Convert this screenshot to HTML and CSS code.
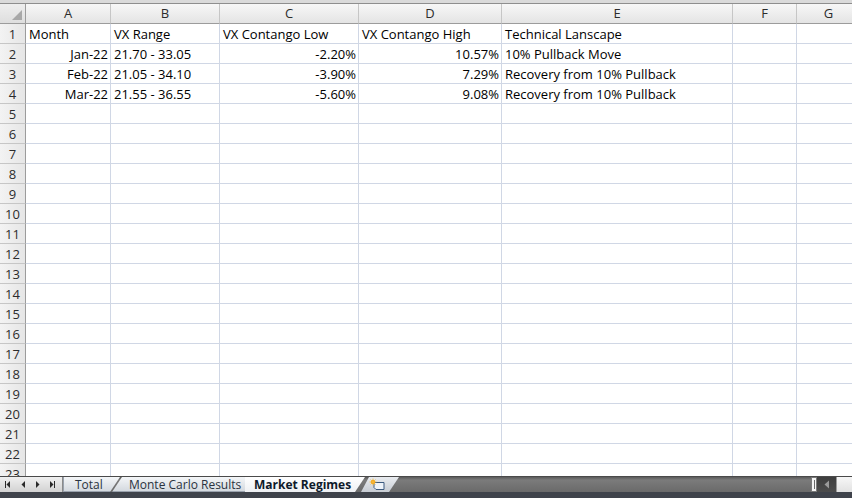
FILE: index.html
```html
<!DOCTYPE html>
<html>
<head>
<meta charset="utf-8">
<link rel="stylesheet" href="styles.css">
</head>
<body>
<div class="app">
  <div class="ribbon-edge"></div>
  <div class="sheet">
    <div class="grid">
      <div class="corner"><svg width="12" height="12" viewBox="0 0 12 12"><polygon points="11,1 11,11 1,11" fill="#a8a8a8"/></svg></div>
      <div class="colhead">A</div><div class="colhead">B</div><div class="colhead">C</div><div class="colhead">D</div><div class="colhead">E</div><div class="colhead">F</div><div class="colhead">G</div>

      <div class="rowhead">1</div><div class="cell">Month</div><div class="cell">VX Range</div><div class="cell">VX Contango Low</div><div class="cell">VX Contango High</div><div class="cell">Technical Lanscape</div><div class="cell"></div><div class="cell"></div>
      <div class="rowhead">2</div><div class="cell num">Jan-22</div><div class="cell">21.70 - 33.05</div><div class="cell num">-2.20%</div><div class="cell num">10.57%</div><div class="cell">10% Pullback Move</div><div class="cell"></div><div class="cell"></div>
      <div class="rowhead">3</div><div class="cell num">Feb-22</div><div class="cell">21.05 - 34.10</div><div class="cell num">-3.90%</div><div class="cell num">7.29%</div><div class="cell">Recovery from 10% Pullback</div><div class="cell"></div><div class="cell"></div>
      <div class="rowhead">4</div><div class="cell num">Mar-22</div><div class="cell">21.55 - 36.55</div><div class="cell num">-5.60%</div><div class="cell num">9.08%</div><div class="cell">Recovery from 10% Pullback</div><div class="cell"></div><div class="cell"></div>
      <div class="rowhead">5</div><div class="cell"></div><div class="cell"></div><div class="cell"></div><div class="cell"></div><div class="cell"></div><div class="cell"></div><div class="cell"></div>
      <div class="rowhead">6</div><div class="cell"></div><div class="cell"></div><div class="cell"></div><div class="cell"></div><div class="cell"></div><div class="cell"></div><div class="cell"></div>
      <div class="rowhead">7</div><div class="cell"></div><div class="cell"></div><div class="cell"></div><div class="cell"></div><div class="cell"></div><div class="cell"></div><div class="cell"></div>
      <div class="rowhead">8</div><div class="cell"></div><div class="cell"></div><div class="cell"></div><div class="cell"></div><div class="cell"></div><div class="cell"></div><div class="cell"></div>
      <div class="rowhead">9</div><div class="cell"></div><div class="cell"></div><div class="cell"></div><div class="cell"></div><div class="cell"></div><div class="cell"></div><div class="cell"></div>
      <div class="rowhead">10</div><div class="cell"></div><div class="cell"></div><div class="cell"></div><div class="cell"></div><div class="cell"></div><div class="cell"></div><div class="cell"></div>
      <div class="rowhead">11</div><div class="cell"></div><div class="cell"></div><div class="cell"></div><div class="cell"></div><div class="cell"></div><div class="cell"></div><div class="cell"></div>
      <div class="rowhead">12</div><div class="cell"></div><div class="cell"></div><div class="cell"></div><div class="cell"></div><div class="cell"></div><div class="cell"></div><div class="cell"></div>
      <div class="rowhead">13</div><div class="cell"></div><div class="cell"></div><div class="cell"></div><div class="cell"></div><div class="cell"></div><div class="cell"></div><div class="cell"></div>
      <div class="rowhead">14</div><div class="cell"></div><div class="cell"></div><div class="cell"></div><div class="cell"></div><div class="cell"></div><div class="cell"></div><div class="cell"></div>
      <div class="rowhead">15</div><div class="cell"></div><div class="cell"></div><div class="cell"></div><div class="cell"></div><div class="cell"></div><div class="cell"></div><div class="cell"></div>
      <div class="rowhead">16</div><div class="cell"></div><div class="cell"></div><div class="cell"></div><div class="cell"></div><div class="cell"></div><div class="cell"></div><div class="cell"></div>
      <div class="rowhead">17</div><div class="cell"></div><div class="cell"></div><div class="cell"></div><div class="cell"></div><div class="cell"></div><div class="cell"></div><div class="cell"></div>
      <div class="rowhead">18</div><div class="cell"></div><div class="cell"></div><div class="cell"></div><div class="cell"></div><div class="cell"></div><div class="cell"></div><div class="cell"></div>
      <div class="rowhead">19</div><div class="cell"></div><div class="cell"></div><div class="cell"></div><div class="cell"></div><div class="cell"></div><div class="cell"></div><div class="cell"></div>
      <div class="rowhead">20</div><div class="cell"></div><div class="cell"></div><div class="cell"></div><div class="cell"></div><div class="cell"></div><div class="cell"></div><div class="cell"></div>
      <div class="rowhead">21</div><div class="cell"></div><div class="cell"></div><div class="cell"></div><div class="cell"></div><div class="cell"></div><div class="cell"></div><div class="cell"></div>
      <div class="rowhead">22</div><div class="cell"></div><div class="cell"></div><div class="cell"></div><div class="cell"></div><div class="cell"></div><div class="cell"></div><div class="cell"></div>
      <div class="rowhead">23</div><div class="cell"></div><div class="cell"></div><div class="cell"></div><div class="cell"></div><div class="cell"></div><div class="cell"></div><div class="cell"></div>
    </div>
  </div>
  <div class="tabbar">
    <div class="nav">
      <svg width="62" height="15" viewBox="0 0 62 15">
        <rect x="5" y="4" width="1" height="7" fill="#2a2a2a"/>
        <polygon points="10,4 10,11 6.5,7.5" fill="#2a2a2a"/>
        <polygon points="25,4 25,11 21.5,7.5" fill="#2a2a2a"/>
        <polygon points="36,4 36,11 39.5,7.5" fill="#2a2a2a"/>
        <polygon points="50,4 50,11 53.5,7.5" fill="#2a2a2a"/>
        <rect x="54" y="4" width="1" height="7" fill="#2a2a2a"/>
      </svg>
    </div>
    <div class="tab tab-first">Total</div>
    <div class="tab tab-mid">Monte Carlo Results</div>
    <div class="tab tab-active">Market Regimes</div>
    <div class="tab-new">
      <svg width="22" height="14" viewBox="0 0 22 14">
        <path d="M7 4.5 H17 V11.5 H9 L7 9.5 Z" fill="#eef3f9" stroke="#3d5b80" stroke-width="1"/>
        <circle cx="6" cy="4" r="2.2" fill="#f2a21c"/>
        <path d="M6 0.5 V7.5 M2.5 4 H9.5 M3.5 1.5 L8.5 6.5 M8.5 1.5 L3.5 6.5" stroke="#f6b93a" stroke-width="0.8"/>
      </svg>
    </div>
    <div class="strip"></div>
    <div class="hscroll">
      <div class="splitter"><span></span></div>
      <div class="arrow"><svg width="8" height="9" viewBox="0 0 8 9"><polygon points="6,0.5 6,8.5 1.5,4.5" fill="#9a9a9a"/></svg></div>
      <div class="thumb"></div>
    </div>
  </div>
  <div class="statusedge"></div>
</div>
</body>
</html>
```

FILE: styles.css
```css
html, body {
  margin: 0;
  padding: 0;
  width: 852px;
  height: 498px;
  overflow: hidden;
  background: #ffffff;
}

.app {
  display: flex;
  flex-direction: column;
  height: 498px;
  font-family: "Open Sans", "Liberation Sans", sans-serif;
}

.ribbon-edge {
  height: 3px;
  background: #dadada;
  border-bottom: 1px solid #8e8e8e;
  flex: none;
}

.sheet {
  flex: 1;
  overflow: hidden;
  background: #ffffff;
}

.grid {
  display: grid;
  grid-template-columns: 26px 85px 109px 139px 143px 231px 64px 64px;
  grid-auto-rows: 20px;
  width: 861px;
}

.grid > div {
  box-sizing: border-box;
  height: 20px;
  overflow: hidden;
  white-space: nowrap;
}

.corner {
  background: linear-gradient(#eeeeee, #dedede);
  border-right: 1px solid #9c9c9c;
  border-bottom: 1px solid #9c9c9c;
  display: flex;
  align-items: flex-end;
  justify-content: flex-end;
  padding: 0 2px 2px 0;
}

.corner svg { display: block; }

.colhead {
  background: linear-gradient(#f7f7f7, #e4e4e4);
  border-right: 1px solid #c6c6c6;
  border-bottom: 1px solid #9c9c9c;
  color: #2c2c2c;
  font-size: 13px;
  line-height: 19px;
  text-align: center;
}

.rowhead {
  background: linear-gradient(90deg, #f3f3f3, #e6e6e6);
  border-right: 1px solid #9c9c9c;
  border-bottom: 1px solid #c6c6c6;
  color: #2c2c2c;
  font-size: 13px;
  line-height: 20px;
  text-align: center;
}

.cell {
  border-right: 1px solid #d0d7e5;
  border-bottom: 1px solid #d0d7e5;
  color: #000000;
  font-size: 13px;
  line-height: 20px;
  padding: 0 2px 0 3px;
}

.cell.num { text-align: right; }

/* sheet tabs */
.tabbar {
  height: 15px;
  flex: none;
  display: flex;
  align-items: stretch;
  background: linear-gradient(#5a5a5a, #7b7b7b 20%, #6a6a6a);
  border-top: 1px solid #4a4a4a;
  font-size: 12px;
  line-height: 15px;
  position: relative;
}

.nav {
  width: 62px;
  flex: none;
  background: linear-gradient(#f0f0f0, #d2d2d2);
  border-right: 1px solid #8a8a8a;
}

.nav svg { display: block; }

.tab {
  flex: none;
  color: #2a3340;
  background: linear-gradient(#f4f6f8, #d4d9df);
  border-bottom: 1px solid #9aa2ad;
  box-sizing: border-box;
}

.tab-first {
  width: 57px;
  padding-left: 11px;
  margin-right: -8px;
  clip-path: polygon(0 0, 100% 0, calc(100% - 10px) 100%, 0 100%);
  border-left: 1px solid #9aa2ad;
}

.tab-mid {
  width: 137px;
  padding-left: 17px;
  margin-right: -4px;
  clip-path: polygon(0 100%, 10px 0, 100% 0, calc(100% - 4px) 100%);
  box-shadow: inset -1px 0 #8d96a3;
}

.tab-active {
  width: 120px;
  padding-left: 9px;
  font-weight: bold;
  color: #0e1a2a;
  background: linear-gradient(#ffffff, #eef0f3);
  border-bottom: none;
  clip-path: polygon(0 0, 100% 0, calc(100% - 10px) 100%, 0 100%);
  margin-right: -6px;
  position: relative;
  z-index: 1;
}

.tab-new {
  flex: none;
  width: 38px;
  margin-left: 2px;
  background: linear-gradient(#e9ecf0, #c7ccd3);
  clip-path: polygon(8px 0, 100% 0, calc(100% - 10px) 100%, 0 100%);
  display: flex;
  align-items: center;
  justify-content: center;
}

.tab-new svg { display: block; margin-left: -4px; }

.strip { flex: 1; }

.hscroll {
  flex: none;
  display: flex;
  width: 41px;
}

.splitter {
  width: 6px;
  background: #f4f4f4;
  border: 1px solid #7a7a7a;
  box-sizing: border-box;
  display: flex;
  align-items: center;
  justify-content: center;
}

.splitter span {
  display: block;
  width: 1px;
  height: 9px;
  background: #6a6a6a;
}

.arrow {
  width: 19px;
  background: linear-gradient(#3e3e3e, #4c4c4c);
  display: flex;
  align-items: center;
  justify-content: center;
}

.arrow svg { display: block; }

.thumb {
  flex: 1;
  background: linear-gradient(#f7f7f7, #e1e1e1);
  border-left: 1px solid #9a9a9a;
}

.statusedge {
  height: 6px;
  flex: none;
  background: #3f434b;
}
```
